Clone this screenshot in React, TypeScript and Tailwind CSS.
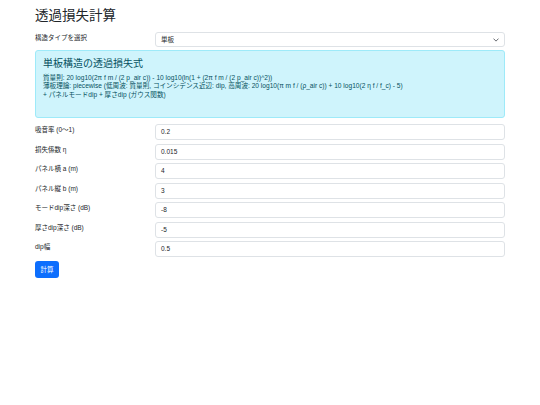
import React from "react";

const fields = [
  { label: "吸音率 (0〜1)", value: "0.2" },
  { label: "損失係数 η", value: "0.015" },
  { label: "パネル横 a (m)", value: "4" },
  { label: "パネル縦 b (m)", value: "3" },
  { label: "モードdip深さ (dB)", value: "-8" },
  { label: "厚さdip深さ (dB)", value: "-5" },
  { label: "dip幅", value: "0.5" },
];

export default function App() {
  return (
    <div
      className="min-h-[405px] bg-white text-[#212529]"
      style={{ fontFamily: '"Liberation Sans", "Noto Sans CJK JP", sans-serif' }}
    >
      <div className="mx-auto w-[470px] pt-[8px]">
        <h1 className="text-[13.5px] leading-[16px] font-normal mb-[8px]">透過損失計算</h1>

        <div className="grid grid-cols-[120px_1fr] mb-[3px]">
          <label className="text-[6.5px] leading-[8px] pt-[2px]">構造タイプを選択</label>
          <div className="h-[15px] border border-[#dee2e6] rounded-[3px] flex items-center justify-between px-[5px] text-[6.5px]">
            <span>単板</span>
            <svg width="6" height="6" viewBox="0 0 16 16" fill="none" stroke="#343a40" strokeWidth="2" strokeLinecap="round" strokeLinejoin="round">
              <path d="m2 5 6 6 6-6" />
            </svg>
          </div>
        </div>

        <div className="h-[68px] border border-[#9eeaf9] bg-[#cff4fc] rounded-[3px] px-[7px] pt-[7px] mb-[6px]">
          <h4 className="text-[10px] leading-[12px] font-normal text-[#055160] mb-[4px]">単板構造の透過損失式</h4>
          <p className="text-[6.6px] leading-[8.3px] text-[#055160]">
            質量則: 20 log10(2π f m / (2 p_air c)) - 10 log10(ln(1 + (2π f m / (2 p_air c))^2))
            <br />
            薄板理論: piecewise (低周波: 質量則, コインシデンス近辺: dip, 高周波: 20 log10(π m f / (ρ_air c)) + 10 log10(2 η f / f_c) - 5)
            <br />+ パネルモードdip + 厚さdip (ガウス関数)
          </p>
        </div>

        <div className="flex flex-col gap-[3.5px]">
          {fields.map((f) => (
            <div key={f.label} className="grid grid-cols-[120px_1fr]">
              <label className="text-[6.5px] leading-[8px] pt-[2px]">{f.label}</label>
              <div className="h-[16px] border border-[#dee2e6] rounded-[3px] flex items-center px-[5px] text-[6.5px]">
                {f.value}
              </div>
            </div>
          ))}
        </div>

        <button className="block mt-[4px] w-[24px] h-[17px] rounded-[3px] bg-[#0d6efd] text-white text-[6.5px] leading-[8px]">
          計算
        </button>
      </div>
    </div>
  );
}
